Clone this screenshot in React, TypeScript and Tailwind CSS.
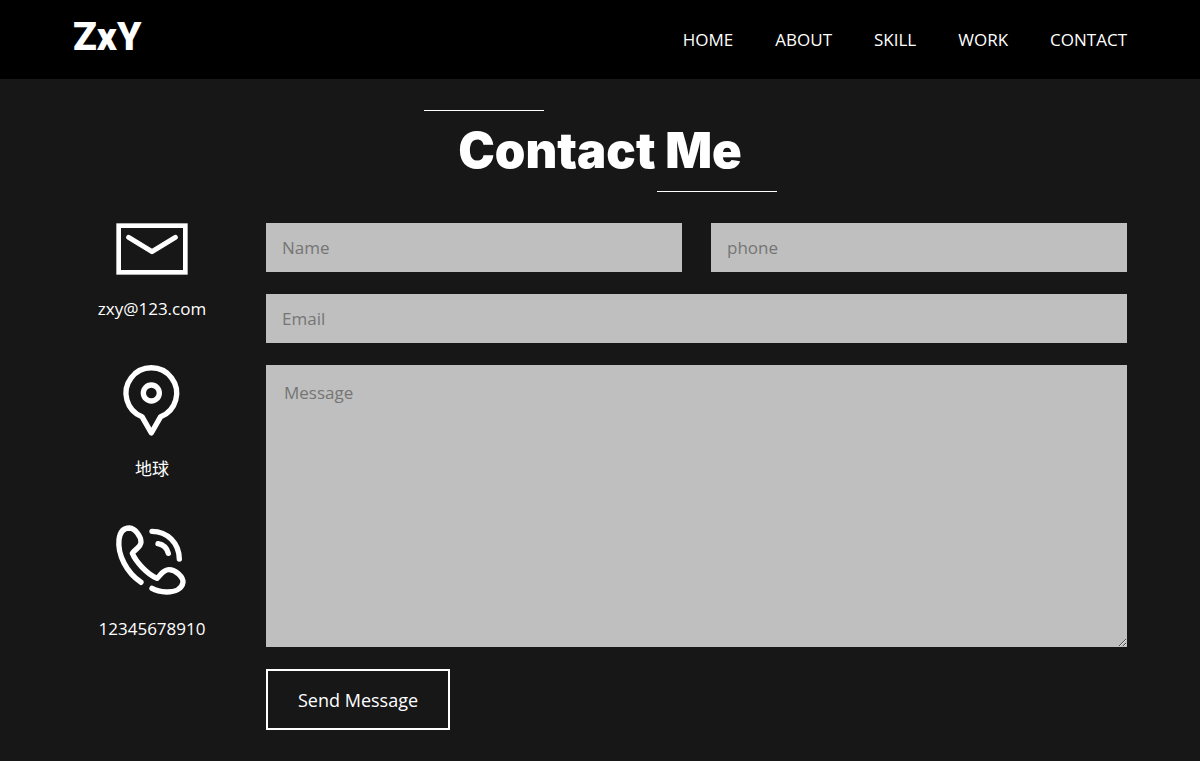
import type { ReactNode } from "react";

const links = ["HOME", "ABOUT", "SKILL", "WORK", "CONTACT"];

function MailIcon() {
  return (
    <svg viewBox="0 0 216 156" className="h-[52px] w-[72px]" fill="none" stroke="#fff" aria-hidden="true">
      <rect x="8" y="8" width="200" height="140" strokeWidth="14" />
      <path d="M38 43 L108 86 L178 43" strokeWidth="15" strokeLinecap="round" strokeLinejoin="round" />
    </svg>
  );
}

function PinIcon() {
  return (
    <svg viewBox="94 30 180 210" className="h-[70px] w-[60px] overflow-visible" fill="none" stroke="#fff" strokeWidth="16" strokeLinejoin="round" aria-hidden="true">
      <path d="M182 234 L154 185 A76 76 0 1 1 210 185 Z" />
      <circle cx="182" cy="114" r="24" />
    </svg>
  );
}

function PhoneIcon() {
  return (
    <svg viewBox="78 29 216 210" className="h-[70px] w-[72px] overflow-visible" fill="none" stroke="#fff" strokeWidth="16" strokeLinecap="round" strokeLinejoin="round" aria-hidden="true">
      <path d="M153 201 C110 172 82 118 87 73 C90 48 103 38 118 38 C136 39 153 64 153 80 C153 96 131 105 127 114 C137 139 171 176 201 189 C211 181 218 163 237 163 C257 163 280 185 279 201 C276 220 257 230 230 230 C213 229 198 226 186 219" />
      <path d="M186 48 C232 48 267 83 268 131" />
      <path d="M204 85 C221 88 231 99 235 114" />
    </svg>
  );
}

function ContactItem({ icon, children }: { icon: ReactNode; children: ReactNode }) {
  return (
    <li className="flex flex-col items-center gap-[22px] whitespace-nowrap text-[17px] leading-6">
      {icon}
      {children}
    </li>
  );
}

const field = "block h-[49px] w-full rounded-none bg-[#bfbfbf] px-4 text-[17px] text-black outline-none placeholder:text-[#757575]";

export default function App() {
  return (
    <div className="min-h-screen bg-[#171717] font-['Open_Sans','Noto_Sans_CJK_SC',sans-serif] text-white">
      <header className="flex h-[79px] items-center justify-between bg-black px-[73px]">
        <a href="#home" className="pb-1.5 font-['Roboto',sans-serif] text-[39px] leading-10 font-black">ZxY</a>
        <nav className="flex gap-[42px] text-[17px] leading-6">
          {links.map((label) => (
            <a key={label} href={`#${label.toLowerCase()}`}>{label}</a>
          ))}
        </nav>
      </header>

      <main id="contact" className="px-[73px] pt-[31px] pb-[30px]">
        <div className="mx-auto flex w-[353px] flex-col">
          <span className="h-px w-[120px] bg-white" />
          <h1 className="text-center font-['Inter',sans-serif] text-[49px] leading-[80px] font-black whitespace-nowrap">Contact Me</h1>
          <span className="h-px w-[120px] self-end bg-white" />
        </div>

        <div className="mt-[31px] flex gap-[35px]">
          <ul className="flex w-[158px] shrink-0 flex-col gap-11">
            <ContactItem icon={<MailIcon />}>zxy@123.com</ContactItem>
            <ContactItem icon={<PinIcon />}>地球</ContactItem>
            <ContactItem icon={<PhoneIcon />}>12345678910</ContactItem>
          </ul>

          <form className="flex min-w-0 flex-1 flex-col items-start gap-[22px]" onSubmit={(e) => e.preventDefault()}>
            <div className="grid w-full grid-cols-2 gap-[29px]">
              <input type="text" aria-label="Name" placeholder="Name" className={field} />
              <input type="tel" aria-label="phone" placeholder="phone" className={field} />
            </div>
            <input type="email" aria-label="Email" placeholder="Email" className={field} />
            <textarea
              aria-label="Message"
              placeholder="Message"
              className="block h-[282px] w-full resize rounded-none bg-[#bfbfbf] px-[18px] py-4 text-[17px] leading-6 text-black outline-none placeholder:text-[#757575]"
            />
            <button type="submit" className="h-[61px] border-2 border-white px-[30px] text-lg">Send Message</button>
          </form>
        </div>
      </main>
    </div>
  );
}
